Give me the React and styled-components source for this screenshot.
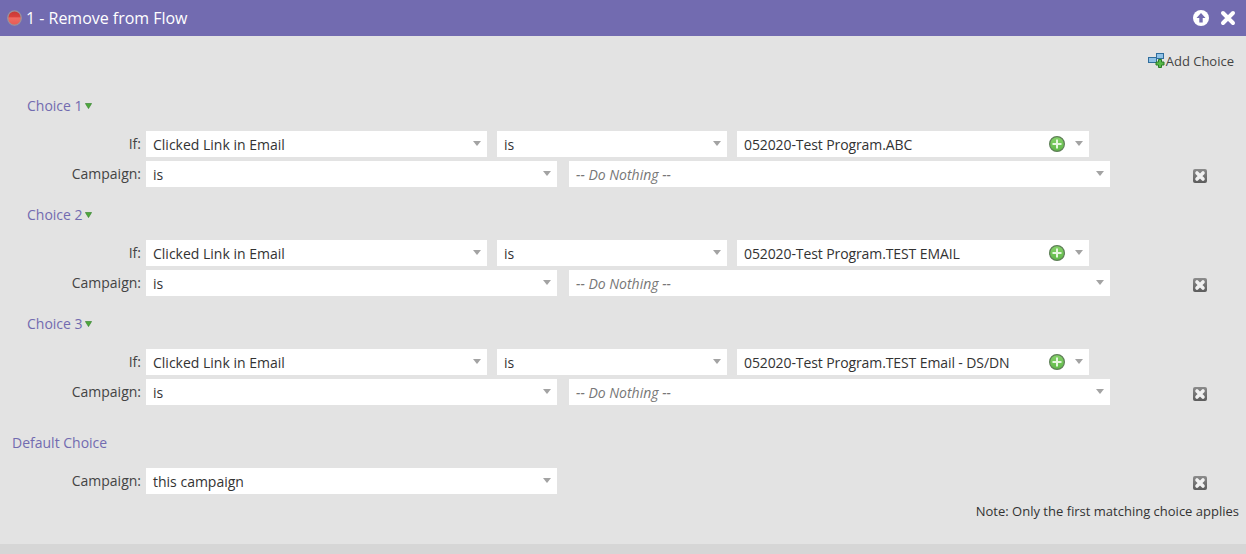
import React from 'react';
import styled, { createGlobalStyle } from 'styled-components';

const GlobalStyle = createGlobalStyle`
  html, body {
    margin: 0;
    height: 100%;
    background: #e3e3e3;
    font-family: "Open Sans", "Liberation Sans", sans-serif;
  }
`;

const Page = styled.div`
  width: 1246px;
  height: 554px;
  display: flex;
  flex-direction: column;
  overflow: hidden;
  background: #e3e3e3;
  color: #333;
  font-size: 14px;
`;

const Header = styled.div`
  height: 36px;
  flex: none;
  display: flex;
  align-items: center;
  padding: 0 10px 0 7px;
  background: #726bb0;
  color: #fff;
`;

const HeaderTitle = styled.div`
  flex: 1;
  margin-left: 5px;
  font-size: 16px;
  font-weight: 400;
  letter-spacing: -0.02px;
  transform: translateX(-1px);
`;

const HeaderIcons = styled.div`
  display: flex;
  align-items: center;
  gap: 11px;
`;

const Toolbar = styled.div`
  height: 60px;
  flex: none;
  box-sizing: border-box;
  padding: 15px 12px 0 0;
  display: flex;
  justify-content: flex-end;
  align-items: flex-start;
`;

const AddChoice = styled.div`
  display: flex;
  align-items: center;
  height: 20px;
  font-size: 13px;
  color: #444;
`;

const Block = styled.section`
  margin-bottom: ${(p) => p.$gap}px;
`;

const BlockTitle = styled.div`
  height: 20px;
  line-height: 20px;
  margin-bottom: 15px;
  padding-left: ${(p) => p.$indent}px;
  display: flex;
  align-items: center;
  gap: 2px;
  color: #726bb0;
`;

const Rows = styled.div`
  display: flex;
  flex-direction: column;
  gap: 4px;
`;

const Row = styled.div`
  display: flex;
  align-items: center;
  height: 26px;
  padding-right: 39px;
`;

const Label = styled.div`
  width: 141px;
  margin-right: 5px;
  padding-bottom: 2px;
  text-align: right;
  color: #444;
`;

const Select = styled.div`
  box-sizing: border-box;
  width: ${(p) => p.$w}px;
  height: 26px;
  margin-left: ${(p) => p.$ml || 0}px;
  padding: 0 7px;
  display: flex;
  align-items: center;
  background: #fff;
  color: #333;
  white-space: nowrap;
`;

const SelectText = styled.span`
  flex: 1;
  font-style: ${(p) => (p.$muted ? 'italic' : 'normal')};
  color: ${(p) => (p.$muted ? '#777' : '#333')};
  letter-spacing: ${(p) => (p.$tight ? '-0.1px' : 'normal')};
`;

const Caret = styled.span`
  width: 0;
  height: 0;
  margin: -2px -1px 0 ${(p) => p.$ml || 0}px;
  border-left: 4px solid transparent;
  border-right: 4px solid transparent;
  border-top: 5px solid #a3a3a3;
`;

const RemoveButton = styled.svg`
  margin-left: auto;
  align-self: flex-start;
  margin-top: ${(p) => p.$top}px;
  flex: none;
`;

const Note = styled.div`
  height: 20px;
  margin-top: 7px;
  padding-right: 7px;
  line-height: 20px;
  text-align: right;
  font-size: 13px;
  color: #333;
`;

const Spacer = styled.div`
  flex: 1;
`;

const Footer = styled.div`
  height: 10px;
  flex: none;
  background: #d6d6d6;
`;

const StopIcon = () => (
  <svg width="15" height="16" viewBox="0 0 15 16">
    <defs>
      <linearGradient id="stopFill" x1="0" y1="0" x2="0" y2="1">
        <stop offset="0" stopColor="#c43a36" />
        <stop offset="0.4" stopColor="#d8403c" />
        <stop offset="0.5" stopColor="#ee6a62" />
        <stop offset="1" stopColor="#e65a52" />
      </linearGradient>
    </defs>
    <ellipse cx="7.5" cy="8" rx="6.8" ry="7.2" fill="url(#stopFill)" stroke="#9a929c" strokeWidth="1.2" />
  </svg>
);

const UpIcon = () => (
  <svg width="16" height="16" viewBox="0 0 16 16">
    <circle cx="8" cy="8" r="8" fill="#fff" />
    <path d="M8 3 L12.5 8 H9.7 V12.5 H6.3 V8 H3.5 Z" fill="#726bb0" />
  </svg>
);

const CloseIcon = () => (
  <svg width="16" height="16" viewBox="0 0 16 16">
    <path d="M3 3 L13 13 M13 3 L3 13" stroke="#fff" strokeWidth="4" strokeLinecap="round" />
  </svg>
);

const AddChoiceIcon = () => (
  <svg width="18" height="16" viewBox="0 0 18 16">
    <rect x="0.5" y="4.5" width="8" height="5" fill="#8fc1e6" stroke="#2f6d9c" />
    <rect x="8.5" y="0.5" width="7" height="5" fill="#8fc1e6" stroke="#2f6d9c" />
    <path d="M10.5 6.5 h3 v2.5 h2.5 v3 h-2.5 v2.5 h-3 v-2.5 h-2.5 v-3 h2.5 z" fill="#57b948" stroke="#2a7d26" strokeWidth="1" />
  </svg>
);

const ArrowDown = () => (
  <svg width="7" height="6" viewBox="0 0 7 6">
    <path d="M0.4 0.5 H6.6 L3.5 5.6 Z" fill="#4ea83c" stroke="#2f7d28" strokeWidth="0.6" />
  </svg>
);

const PlusCircle = () => (
  <svg width="16" height="16" viewBox="0 0 16 16">
    <defs>
      <linearGradient id="plusFill" x1="0" y1="0" x2="0" y2="1">
        <stop offset="0" stopColor="#86d36a" />
        <stop offset="1" stopColor="#5fb848" />
      </linearGradient>
    </defs>
    <circle cx="8" cy="8" r="7.4" fill="url(#plusFill)" stroke="#5f7f58" strokeWidth="1.2" />
    <path d="M8 3.5 V12.5 M3.5 8 H12.5" stroke="#e6f6df" strokeWidth="2" />
  </svg>
);

const RemoveIcon = ({ top }) => (
  <RemoveButton $top={top} width="14" height="14" viewBox="0 0 14 14">
    <defs>
      <linearGradient id="removeFill" x1="0" y1="0" x2="0" y2="1">
        <stop offset="0" stopColor="#8c8c8c" />
        <stop offset="1" stopColor="#5c5c5c" />
      </linearGradient>
    </defs>
    <rect width="14" height="14" rx="2" fill="url(#removeFill)" />
    <path d="M4 4 L10 10 M10 4 L4 10" stroke="#f1f1f1" strokeWidth="3.6" strokeLinecap="round" />
  </RemoveButton>
);

const choices = [
  { id: 1, value: '052020-Test Program.ABC' },
  { id: 2, value: '052020-Test Program.TEST EMAIL' },
  { id: 3, value: '052020-Test Program.TEST Email - DS/DN' },
];

export default function App() {
  return (
    <Page>
      <GlobalStyle />
      <Header>
        <StopIcon />
        <HeaderTitle>1 - Remove from Flow</HeaderTitle>
        <HeaderIcons>
          <UpIcon />
          <CloseIcon />
        </HeaderIcons>
      </Header>
      <Toolbar>
        <AddChoice>
          <AddChoiceIcon />
          Add Choice
        </AddChoice>
      </Toolbar>
      {choices.map((c, i) => (
        <Block key={c.id} $gap={i === 2 ? 28 : 18}>
          <BlockTitle $indent={27}>
            Choice {c.id}
            <ArrowDown />
          </BlockTitle>
          <Rows>
            <Row>
              <Label>If:</Label>
              <Select $w={341}>
                <SelectText>Clicked Link in Email</SelectText>
                <Caret />
              </Select>
              <Select $w={230} $ml={10}>
                <SelectText>is</SelectText>
                <Caret />
              </Select>
              <Select $w={352} $ml={10}>
                <SelectText $tight>{c.value}</SelectText>
                <PlusCircle />
                <Caret $ml={10} />
              </Select>
            </Row>
            <Row>
              <Label>Campaign:</Label>
              <Select $w={411}>
                <SelectText>is</SelectText>
                <Caret />
              </Select>
              <Select $w={541} $ml={12}>
                <SelectText $muted>-- Do Nothing --</SelectText>
                <Caret />
              </Select>
              <RemoveIcon top={8} />
            </Row>
          </Rows>
        </Block>
      ))}
      <Block $gap={0}>
        <BlockTitle $indent={12}>Default Choice</BlockTitle>
        <Row>
          <Label>Campaign:</Label>
          <Select $w={411}>
            <SelectText>this campaign</SelectText>
            <Caret />
          </Select>
          <RemoveIcon top={8} />
        </Row>
      </Block>
      <Note>Note: Only the first matching choice applies</Note>
      <Spacer />
      <Footer />
    </Page>
  );
}
